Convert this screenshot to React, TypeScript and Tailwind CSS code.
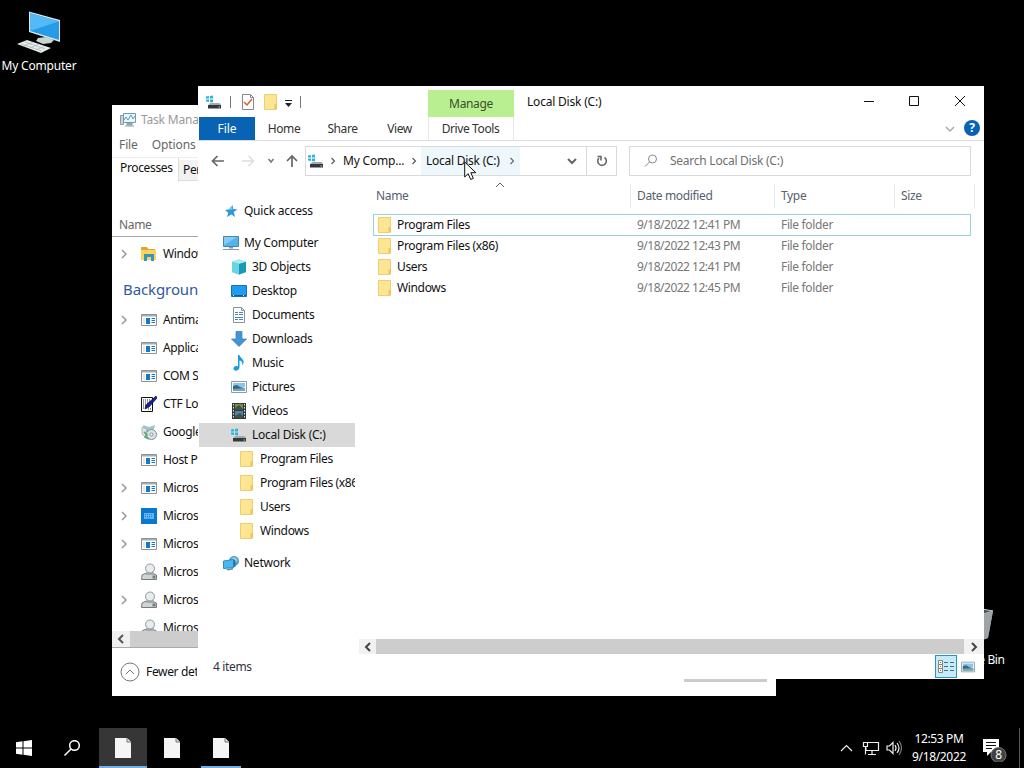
import type { ReactNode } from "react";

const DiskIcon = () => (
  <svg width="16" height="16" viewBox="0 0 16 16" className="shrink-0">
    <path d="M0 2.500L3 2v2.500H0zM4 2l3-.5v3H4zM0 5.500h3V8l-3-.5zM4 5.500h3v3L4 8z" fill="#27b4dd" />
    <path d="M4 9h9.500l1.500 2H2.500z" fill="#a4abae" />
    <path d="M2 11h13v3.500H2z" fill="#33383c" />
    <path d="M12.500 12.500H14v1h-1.500z" fill="#9fd6b0" />
  </svg>
);

const FolderIcon = () => (
  <svg width="16" height="16" viewBox="0 0 16 16" className="shrink-0">
    <path d="M1.500.5h12V11l-1 4.500h-11z" fill="#fce593" stroke="#edcf70" />
    <path d="M11.500 10.500l2.500-1v6h-2.500z" fill="#edc75c" />
  </svg>
);

const PictureIcon = ({ size = 16 }: { size?: number }) => (
  <svg width={size} height={size} viewBox="0 0 16 16" className="shrink-0">
    <path d="M.5 2.500h15v11H.5z" fill="#fff" stroke="#8a9bab" />
    <path d="M2 4h12v4H2z" fill="#8bc4ee" />
    <path d="M2 7l4-1 3 2 5 1v3H2z" fill="#34697f" />
    <path d="M2 10l12-1v3H2z" fill="#77a7ba" />
  </svg>
);

const StarIcon = () => (
  <svg width="16" height="16" viewBox="0 0 16 16" className="shrink-0">
    <path d="M9.500 2l.8 4 4.200.5-3.700 2.500 1.200 5-3.700-2.500L4 14l1.200-4.300L2 7l4.300-.7z" fill="#3299d7" />
    <path d="M5 7l4-4 .5 3.500z" fill="#74c5ef" />
  </svg>
);

const MonitorIcon = () => (
  <svg width="16" height="16" viewBox="0 0 16 16" className="shrink-0">
    <path d="M.5 1.500h15v10H.5z" fill="#54b2ec" stroke="#4884ae" />
    <path d="M1 2h13L1 10z" fill="#84ccf6" />
    <path d="M6 12h4v1.500H6zM0 14h16v1H0z" fill="#829aa9" />
  </svg>
);

const CubeIcon = () => (
  <svg width="16" height="16" viewBox="0 0 16 16" className="shrink-0">
    <path d="M1 3l7-2.500L15 3v10l-7 2.500L1 13z" fill="#38b6cf" />
    <path d="M1 3l7-2.500L15 3 8 5z" fill="#a5edf2" />
    <path d="M1 3l7 2v10.500L1 13z" fill="#6bd3e1" />
    <path d="M8 5l7-2v10l-7 2.500z" fill="#179ab7" />
  </svg>
);

const DesktopIcon = () => (
  <svg width="16" height="16" viewBox="0 0 16 16" className="shrink-0">
    <path d="M.5 2.500h15v11H.5z" fill="#209df0" stroke="#1473b6" />
    <path d="M1 12h14v1H1z" fill="#15588e" />
    <path d="M2 12h1v1H2zM12 12h1v1h-1z" fill="#fff" />
  </svg>
);

const DocumentIcon = () => (
  <svg width="16" height="16" viewBox="0 0 16 16" className="shrink-0">
    <path d="M2.500.5h8l3 3v12h-11z" fill="#fff" stroke="#8792a0" />
    <path d="M10.500.5v3h3" fill="none" stroke="#8792a0" />
    <path d="M4 5.500h3M8 5.500h4M4 7.500h3M8 7.500h4M4 10.500h8M4 12.500h3M8 12.500h4" stroke="#4c83b4" />
  </svg>
);

const DownloadIcon = () => (
  <svg width="16" height="16" viewBox="0 0 16 16" className="shrink-0">
    <path d="M5 .5h6V8h4.500L8 15.500.5 8H5z" fill="#4295d3" stroke="#3479b5" strokeWidth=".7" />
  </svg>
);

const MusicIcon = () => (
  <svg width="16" height="16" viewBox="0 0 16 16" className="shrink-0">
    <path d="M7 0h1.500c.3 3 5 4 4 8-.2 1-1 2-1.500 2 1-3-.5-4-2.500-4.500V12c0 4-6 5-6 1.500 0-2 2.500-3 4.500-2z" fill="#199bdc" />
  </svg>
);

const VideoIcon = () => (
  <svg width="16" height="16" viewBox="0 0 16 16" className="shrink-0">
    <path d="M1 0h14v16H1z" fill="#34383c" />
    <path d="M4 1h8v6H4z" fill="#7c8a4d" />
    <path d="M4 8h8v7H4z" fill="#517fae" />
    <path d="M4 5l4-3 4 4v1H4zM4 13l5-3 3 3v2H4z" fill="#38573f" />
    <path d="M2.500 1v15M13.500 1v15" stroke="#e2e5e5" strokeDasharray="1.500 1.500" />
  </svg>
);

const NetworkIcon = () => (
  <svg width="16" height="16" viewBox="0 0 16 16" className="shrink-0">
    <circle cx="11" cy="6" r="5" fill="#4d9ac2" />
    <path d="M8 3l4-1 3 3-3 4z" fill="#93ccdc" />
    <path d="M.5 6l10-1.500v8l-10 1z" fill="#49b8ee" stroke="#2f8abf" />
    <path d="M10.500 4.500l2 1v6l-2 1z" fill="#2573a7" />
    <path d="M3 14l7-1v1.500L5 15.500z" fill="#538db0" />
  </svg>
);

const Chevron = ({ d, className = "", w = 1.5 }: { d: "left" | "right" | "down" | "up"; className?: string; w?: number }) => {
  const paths = { left: "M7 1L3 5l4 4", right: "M3 1l4 4-4 4", down: "M1 3l4 4 4-4", up: "M1 7l4-4 4 4" };
  return (
    <svg width="10" height="10" viewBox="0 0 10 10" fill="none" stroke="currentColor" strokeWidth={w} className={`shrink-0 ${className}`}>
      <path d={paths[d]} />
    </svg>
  );
};

const AppIcon = () => (
  <svg width="16" height="16" viewBox="0 0 16 16">
    <path d="M.5 2.500h15v11H.5z" fill="#fff" stroke="#8b9299" />
    <path d="M1 3h14v1.500H1z" fill="#a5adb4" />
    <path d="M5 6h4v6H5z" fill="#1677c5" />
    <path d="M10.500 6.500h3.500M10.500 8.500h3.500M10.500 10.500h3.500" stroke="#1677c5" />
    <path d="M2 6h2v6H2z" fill="#e3e8ec" />
  </svg>
);

const ExplorerIcon = () => (
  <svg width="16" height="16" viewBox="0 0 16 16">
    <path d="M0 1h6l1.500 2H14v2H0z" fill="#dea82f" />
    <path d="M0 4h15v10H0z" fill="#fbd35e" />
    <path d="M3 8h10v7h-3v-4H6v4H3z" fill="#3695bd" />
  </svg>
);

const PenIcon = () => (
  <svg width="16" height="16" viewBox="0 0 16 16">
    <path d="M.5 1.500h11v14H.5z" fill="#fff" stroke="#111" />
    <path d="M2 4h8M2 6h7M2 8h6M2 10h4M2 12h3M7 13h3" stroke="#222" strokeDasharray="1 1" />
    <path d="M15 0l1 2-8 9-4 2 1-4z" fill="#17218c" stroke="#080b48" strokeWidth=".7" />
  </svg>
);

const InstallerIcon = () => (
  <svg width="16" height="16" viewBox="0 0 16 16">
    <path d="M2 1l6 2 6-2-2 7H3z" fill="#a1c4cd" />
    <path d="M1 3l5 2-2 8-3-3z" fill="#dce6e7" stroke="#7b9ca4" strokeWidth=".6" />
    <circle cx="10.500" cy="10.500" r="5" fill="#dce2e2" stroke="#789295" />
    <circle cx="10.500" cy="10.500" r="1.500" fill="#fff" stroke="#789295" />
    <path d="M3 8l3 3-2 2 4 2" fill="none" stroke="#57a474" strokeWidth="1.500" />
  </svg>
);

const KeyboardIcon = () => (
  <svg width="16" height="16" viewBox="0 0 16 16">
    <path d="M0 0h16v16H0z" fill="#0878d1" />
    <path d="M3 5h10v6H3z" fill="#68b5ee" />
    <path d="M4 6.500h8M4 8.500h8M6 10h4" stroke="#2388d4" strokeDasharray="1 1" />
  </svg>
);

const ServiceIcon = () => (
  <svg width="16" height="18" viewBox="0 0 16 18">
    <path d="M1 12l3-1.500h8l3.500 1.500v4.500H.5z" fill="#d1d4d5" stroke="#757b7d" />
    <path d="M5 12V9.500L7 7h4l2 2.500V12z" fill="#a4aaad" />
    <circle cx="9" cy="5.500" r="4.500" fill="#e7edef" stroke="#909799" />
    <path d="M11.500 12.500h3v3h-3z" fill="#777d80" />
  </svg>
);

const processes: { name: string; icon: ReactNode; open?: boolean }[] = [
  { name: "Antimalware Service", icon: <AppIcon />, open: true },
  { name: "Application Frame", icon: <AppIcon /> },
  { name: "COM Surrogate", icon: <AppIcon /> },
  { name: "CTF Loader", icon: <PenIcon /> },
  { name: "Google Installer", icon: <InstallerIcon /> },
  { name: "Host Process", icon: <AppIcon /> },
  { name: "Microsoft", icon: <AppIcon />, open: true },
  { name: "Microsoft", icon: <KeyboardIcon />, open: true },
  { name: "Microsoft", icon: <AppIcon />, open: true },
  { name: "Microsoft", icon: <ServiceIcon /> },
  { name: "Microsoft", icon: <ServiceIcon />, open: true },
  { name: "Microsoft", icon: <ServiceIcon /> },
];

const navItems = [
  { name: "3D Objects", icon: <CubeIcon /> },
  { name: "Desktop", icon: <DesktopIcon /> },
  { name: "Documents", icon: <DocumentIcon /> },
  { name: "Downloads", icon: <DownloadIcon /> },
  { name: "Music", icon: <MusicIcon /> },
  { name: "Pictures", icon: <PictureIcon /> },
  { name: "Videos", icon: <VideoIcon /> },
];

const files = [
  { name: "Program Files", date: "9/18/2022 12:41 PM" },
  { name: "Program Files (x86)", date: "9/18/2022 12:43 PM" },
  { name: "Users", date: "9/18/2022 12:41 PM" },
  { name: "Windows", date: "9/18/2022 12:45 PM" },
];

const ProcessRow = ({ name, icon, open }: { name: string; icon: ReactNode; open?: boolean }) => (
  <div className="flex h-7 shrink-0 items-center pl-[7px]">
    <div className="w-[22px] shrink-0 text-[#999]">{open && <Chevron d="right" />}</div>
    <div className="w-[22px] shrink-0">{icon}</div>
    <span>{name}</span>
  </div>
);

const TaskManager = () => (
  <div className="absolute left-[112px] top-[105px] flex h-[591px] w-[664px] flex-col bg-white">
    <div className="flex h-[87px] w-[86px] flex-col overflow-hidden">
      <div className="flex h-[30px] shrink-0 items-center gap-[5px] pl-2 text-[#999]">
        <svg width="16" height="16" viewBox="0 0 16 16" className="shrink-0">
          <path d="M.5 3.500h3v9h-3z" fill="#cbd4d8" stroke="#879fa8" />
          <path d="M3.500 1.500h12v9h-12z" fill="#e7f8fc" stroke="#7a98a6" />
          <path d="M4 8l2-3 2 3 3-5 2 4 2-3" fill="none" stroke="#4ca4be" />
          <path d="M7 11h5v2H7zM5 14h9" fill="#9aafb6" stroke="#879fa8" />
        </svg>
        <span className="tracking-[-0.2px]">Task Manager</span>
      </div>
      <div className="flex h-5 shrink-0 items-center gap-3.5 pl-[7px] tracking-[-0.1px] text-[#666]">
        <span>File</span>
        <span>Options</span>
      </div>
      <div className="mt-[2px] flex h-[25px] shrink-0 border-t border-[#eee]">
        <div className="w-[67px] shrink-0 border-r border-[#ddd] pl-2 pt-[2px]">Processes</div>
        <div className="mt-[2px] h-[21px] border-b border-[#ddd] bg-[#f2f2f2] pl-[4px] pt-[2px]">Performance</div>
      </div>
    </div>
    <div className="flex h-[455px] w-[86px] flex-col overflow-hidden">
      <div className="mt-[20px] flex h-[25px] shrink-0 items-center border-b border-[#a9a9a9] pl-[7px] pt-px text-[#666]">Name</div>
      <div className="mt-[3px]">
        <ProcessRow name="Windows Explorer" icon={<ExplorerIcon />} open />
      </div>
      <div className="flex h-[38px] shrink-0 items-center pl-[11px] pt-[3px] text-[15px] tracking-[-0.1px] text-[#315a9b]">Background</div>
      <div className="flex h-[333px] shrink-0 flex-col overflow-hidden">
        {processes.map((process, i) => (
          <ProcessRow key={i} {...process} />
        ))}
      </div>
    </div>
    <div className="-mt-4 flex h-4 w-[86px] shrink-0 items-center bg-[#cdcdcd]">
      <div className="flex h-4 w-[18px] items-center justify-center bg-[#f0f0f0] text-[#555]">
        <Chevron d="left" w={2} />
      </div>
    </div>
    <div className="flex h-[48px] items-center gap-[6px] border-t border-[#aaa] pl-2">
      <svg width="20" height="20" viewBox="0 0 20 20" fill="none" stroke="#777">
        <circle cx="10" cy="10" r="9" />
        <path d="M6 12l4-4 4 4" />
      </svg>
      <div className="w-[51px] overflow-hidden">Fewer details</div>
    </div>
    <div className="ml-[572px] -mt-4 h-[3px] w-[83px] shrink-0 bg-[#ccc]" />
  </div>
);

const TitleBar = () => (
  <div className="flex h-[31px] shrink-0 items-start">
    <div className="flex h-[31px] w-[230px] items-center pl-2">
      <DiskIcon />
      <div className="ml-2 h-3 w-px bg-[#777]" />
      <svg width="14" height="16" viewBox="0 0 14 16" className="ml-[10px]">
        <path d="M1.500.5h8l3 3v12h-11z" fill="#fff" stroke="#888" />
        <path d="M9.500.5v3h3" fill="none" stroke="#888" />
        <path d="M3 8l3 3 5-6" fill="none" stroke="#dc5a36" strokeWidth="1.500" />
      </svg>
      <div className="ml-2"><FolderIcon /></div>
      <svg width="9" height="9" viewBox="0 0 9 9" className="ml-[5px] mt-[3px]">
        <path d="M1 1.500h7" stroke="#222" />
        <path d="M1 4h7L4.500 8z" fill="#222" />
      </svg>
      <div className="ml-[7px] h-3 w-px bg-[#777]" />
    </div>
    <div className="mt-1 flex h-[27px] w-[86px] items-center justify-center bg-[#b9ef91] text-[#375226]">Manage</div>
    <div className="flex h-[31px] flex-1 items-center pl-[13px] tracking-[-0.2px]">Local Disk (C:)</div>
    <svg width="138" height="31" viewBox="0 0 138 31" fill="none" stroke="#111" className="shrink-0">
      <path d="M18 15.500h10M63.500 10.500h9v9h-9zM109 10l10 10M119 10l-10 10" />
    </svg>
  </div>
);

const RibbonTabs = () => (
  <div className="flex h-6 shrink-0 items-start border-b border-[#d9dce1] tracking-[-0.4px] text-[#333]">
    <div className="ml-px flex h-[23px] w-14 items-center justify-center bg-[#0863b5] tracking-[-0.1px] text-white">File</div>
    <div className="flex h-[23px] w-[58px] items-center justify-center">Home</div>
    <div className="flex h-[23px] w-[59px] items-center justify-center">Share</div>
    <div className="flex h-[23px] w-[56px] items-center justify-center pr-px">View</div>
    <div className="flex h-[23px] w-[86px] items-center justify-center border-x border-[#e3ece1] pr-px">Drive Tools</div>
    <div className="flex-1" />
    <Chevron d="down" className="mr-[9px] mt-[7px] text-[#aaa]" />
    <div className="mr-1 mt-[3px] flex h-4 w-4 items-center justify-center rounded-full bg-[#0863b5] text-[12px] font-bold text-white">?</div>
  </div>
);

const AddressBar = () => (
  <div className="mt-[5px] flex h-[30px] shrink-0 items-center">
    <svg width="107" height="30" viewBox="0 0 107 30" fill="none" className="shrink-0">
      <path d="M26 15H14.500m5-5l-5 5 5 5" stroke="#666" strokeWidth="1.700" />
      <path d="M44 15h11.500m-5-5l5 5-5 5" stroke="#ddd" strokeWidth="1.500" />
      <path d="M70.500 13l2.500 3 2.500-3" stroke="#777" strokeWidth="1.500" />
      <path d="M94 21V10m-5 5l5-5 5 5" stroke="#666" strokeWidth="1.700" />
    </svg>
    <div className="flex h-[30px] w-[312px] shrink-0 items-center border border-[#d9d9d9]">
      <div className="ml-[2px]"><DiskIcon /></div>
      <Chevron d="right" className="ml-1 scale-75 text-[#555]" />
      <span className="ml-[5px] w-[66px] tracking-[-0.2px]">My Comp...</span>
      <Chevron d="right" className="scale-75 text-[#555]" />
      <div className="ml-[2px] flex h-7 w-[99px] items-center bg-[#eef7fc] pl-[5px]">
        <span className="w-[78px] tracking-[-0.25px]">Local Disk (C:)</span>
        <Chevron d="right" className="ml-[3px] scale-75 text-[#666]" />
      </div>
      <div className="flex-1" />
      <Chevron d="down" w={2} className="mr-[9px] text-[#666]" />
      <div className="flex h-7 w-[30px] items-center justify-center border-l border-[#d9d9d9]">
        <svg width="12" height="12" viewBox="0 0 12 12" fill="none" stroke="#666" strokeWidth="1.600">
          <path d="M3 3a4.300 4.300 0 1 0 5.500-.5M1.500 1.500H5v4" />
        </svg>
      </div>
    </div>
    <div className="ml-3 flex h-[30px] w-[342px] items-center border border-[#d9d9d9] pl-[14px] tracking-[-0.25px] text-[#6f6f6f]">
      <svg width="14" height="14" viewBox="0 0 14 14" fill="none" stroke="#888">
        <circle cx="8.500" cy="5" r="4" />
        <path d="M5.500 8L1 12.500" />
      </svg>
      <span className="ml-3">Search Local Disk (C:)</span>
    </div>
  </div>
);

const NavPane = () => (
  <div className="flex w-[157px] shrink-0 flex-col overflow-hidden pt-[23px] tracking-[-0.25px]">
    <div className="flex h-6 shrink-0 items-center gap-[5px] pl-[25px]"><StarIcon />Quick access</div>
    <div className="mt-2 flex h-6 shrink-0 items-center gap-[5px] pl-[25px]"><MonitorIcon />My Computer</div>
    {navItems.map(item => (
      <div key={item.name} className="flex h-6 shrink-0 items-center gap-[5px] pl-[33px]">
        {item.icon}
        {item.name}
      </div>
    ))}
    <div className="ml-px flex h-6 shrink-0 items-center gap-[5px] bg-[#d9d9d9] pl-8"><DiskIcon />Local Disk (C:)</div>
    {files.map(file => (
      <div key={file.name} className="flex h-6 shrink-0 items-center gap-[5px] pl-[41px] tracking-[-0.35px]">
        <FolderIcon />
        {file.name}
      </div>
    ))}
    <div className="mt-2 flex h-6 shrink-0 items-center gap-[5px] pl-[25px]"><NetworkIcon />Network</div>
  </div>
);

const FileList = () => (
  <div className="flex flex-1 flex-col">
    <div className="relative mt-2 flex h-6 items-center text-[#56616f]">
      <div className="flex h-6 w-[275px] items-center pl-[21px]">Name</div>
      <div className="flex h-6 w-[144px] items-center border-l border-[#e8e8e8] pl-[6px]">Date modified</div>
      <div className="flex h-6 w-[120px] items-center border-l border-[#e8e8e8] pl-[6px]">Type</div>
      <div className="flex h-6 w-[81px] items-center border-x border-[#e8e8e8] pl-[6px]">Size</div>
      <Chevron d="up" w={1} className="absolute left-[140px] top-[-4px]" />
    </div>
    <div className="mt-[6px] flex flex-col">
      {files.map((file, i) => (
        <div
          key={file.name}
          className={`ml-[18px] flex w-[598px] items-center border ${i === 0 ? "h-[22px] border-[#9ed0dc]" : "-mt-px h-[22px] border-transparent"}`}
        >
          <div className="flex w-[263px] items-center gap-[4px] pl-[3px]">
            <FolderIcon />
            {file.name}
          </div>
          <span className="w-[144px] tracking-[-0.5px] text-[#777]">{file.date}</span>
          <span className="text-[#777]">File folder</span>
        </div>
      ))}
    </div>
    <div className="flex-1" />
    <div className="ml-1 flex h-[15px] bg-[#cdcdcd]">
      <div className="flex w-[17px] items-center justify-center bg-[#f1f1f1] text-[#444]"><Chevron d="left" w={2} /></div>
      <div className="flex-1" />
      <div className="flex w-5 items-center justify-center bg-[#f1f1f1] text-[#444]"><Chevron d="right" w={2} /></div>
    </div>
  </div>
);

const Explorer = () => (
  <div className="absolute left-[198px] top-[86px] flex h-[593px] w-[786px] flex-col bg-white">
    <TitleBar />
    <RibbonTabs />
    <AddressBar />
    <div className="flex h-[478px] shrink-0">
      <NavPane />
      <FileList />
    </div>
    <div className="flex h-[25px] items-center pl-[15px] text-[#334]">
      <span className="flex-1">4 items</span>
      <div className="flex h-[23px] w-[22px] items-center justify-center border border-[#2d91bd] bg-[#c6ebf8]">
        <svg width="16" height="14" viewBox="0 0 16 14" fill="none">
          <path d="M.5.5h4v4h-4zM.5 4.500h4v4h-4zM.5 8.500h4v4h-4z" fill="#fff" stroke="#888572" />
          <path d="M2 2.500h1M2 6.500h1M2 10.500h1" stroke="#536975" />
          <path d="M6 2.500h4M12 2.500h4M6 6.500h4M12 6.500h4M6 10.500h4M12 10.500h4" stroke="#536975" />
        </svg>
      </div>
      <div className="ml-[4px] mr-[9px]"><PictureIcon size={14} /></div>
    </div>
  </div>
);

const BlankFile = () => (
  <svg width="16" height="22" viewBox="0 0 16 22">
    <path d="M0 1h12l4 4v16H0z" fill="#f5f5f5" />
    <path d="M12 1v4h4" fill="#ddd" stroke="#777" />
  </svg>
);

const Taskbar = () => (
  <div className="absolute bottom-0 left-0 flex h-10 w-full items-center bg-black text-white">
    <div className="flex w-12 justify-center">
      <svg width="16" height="16" viewBox="0 0 16 16">
        <path d="M0 2.300l6.500-1v6.200H0zM7.500 1.200L16 0v7.500H7.500zM0 8.500h6.500v6.200L0 13.700zM7.500 8.500H16V16l-8.500-1.200z" fill="#fff" />
      </svg>
    </div>
    <div className="flex w-12 justify-center">
      <svg width="16" height="16" viewBox="0 0 16 16" fill="none" stroke="#fff" strokeWidth="1.500">
        <circle cx="10.500" cy="5.500" r="4.800" />
        <path d="M7 9L.5 15.500" />
      </svg>
    </div>
    <div className="ml-[3px] flex h-10 w-12 items-center justify-center border-b-2 border-[#73afe4] bg-[#363636] pt-0.5"><BlankFile /></div>
    <div className="ml-px flex h-10 w-12 items-center justify-center border-b-2 border-transparent pr-px pt-0.5"><BlankFile /></div>
    <div className="ml-[5px] flex h-10 w-10 items-center justify-center border-b-2 border-[#73afe4] pr-px pt-0.5"><BlankFile /></div>
    <div className="flex-1" />
    <svg width="62" height="20" viewBox="0 0 62 20" fill="none" stroke="#eee" strokeWidth="1.200">
      <path d="M1 13l5.500-5.500L12 13" />
      <path d="M27 4.500h11.500v8H26v-3M32 12.500v4M28 16.500h8M23.500 4.500h4v4h-4zM25.500 8.500v8" />
      <path d="M47 8h2.500L53 4.500v11L49.500 12H47zM55 7q2 3 0 6M57 5q4 5 0 10" />
      <path d="M59 3q5 7 0 14" stroke="#777" />
    </svg>
    <div className="ml-[6px] flex w-[62px] flex-col items-center leading-[18px]">
      <span>12:53 PM</span>
      <span>9/18/2022</span>
    </div>
    <svg width="28" height="28" viewBox="0 0 28 28" className="ml-[13px]">
      <path d="M0 5h16v13h-8l-4 4v-4H0z" fill="#fff" />
      <path d="M3 8.500h10M3 11.500h10M3 14.500h6" stroke="#111" />
      <circle cx="15.500" cy="21" r="7.500" fill="#414141" stroke="#777" />
      <text x="15.500" y="25" textAnchor="middle" fontSize="12" fill="#fff">8</text>
    </svg>
    <div className="ml-[8px] mr-1 h-10 w-px bg-[#555]" />
  </div>
);

export default function App() {
  return (
    <div className="relative h-[768px] w-[1024px] cursor-default overflow-hidden bg-black font-['Noto_Sans','Open_Sans',sans-serif] text-[12px] leading-4 tracking-[-0.35px] whitespace-nowrap text-[#111]">
      <div className="absolute left-0 top-2 flex w-[78px] flex-col items-center gap-[5px] tracking-[-0.2px] text-white">
        <svg width="48" height="45" viewBox="0 0 48 45">
          <path d="M14 3.500l31 8.500v22L14 24z" fill="#d7e9ef" />
          <path d="M15 5l29 8.200V32L15 23z" fill="#269ce9" />
          <path d="M15 5l29 8.200L15 23z" fill="#54b9f5" />
          <path d="M23 30l8-1 8 3-3 3-8 1-7-3z" fill="#cbd4d3" />
          <path d="M2 36l10-4 24 8-10 5z" fill="#e8eceb" />
          <path d="M6 36l21 7M10 34l20 7M9 38l9-4M15 40l9-4M21 42l9-4" stroke="#a9b3b3" strokeWidth=".7" />
        </svg>
        <span>My Computer</span>
      </div>
      <div className="absolute left-[939px] top-[604px] flex w-[72px] flex-col items-center text-white">
        <svg width="50" height="48" viewBox="0 0 50 48">
          <path d="M9 7l12-4 22 4-5 27-12 4-12-3z" fill="#8d9495" />
          <path d="M9 7l12-4 22 4-13 4z" fill="#4a5152" stroke="#c6cccc" />
          <path d="M30 11l13-4-5 27-11 4z" fill="#9da4a5" />
        </svg>
        <span>Recycle Bin</span>
      </div>
      <TaskManager />
      <Explorer />
      <Taskbar />
      <svg width="14" height="20" viewBox="0 0 14 20" className="absolute left-[464px] top-[161px]">
        <path d="M.7 1v15l3.500-3.300 2.500 5.800 2.600-1.100-2.500-5.700h5z" fill="#fff" stroke="#111" />
      </svg>
    </div>
  );
}
